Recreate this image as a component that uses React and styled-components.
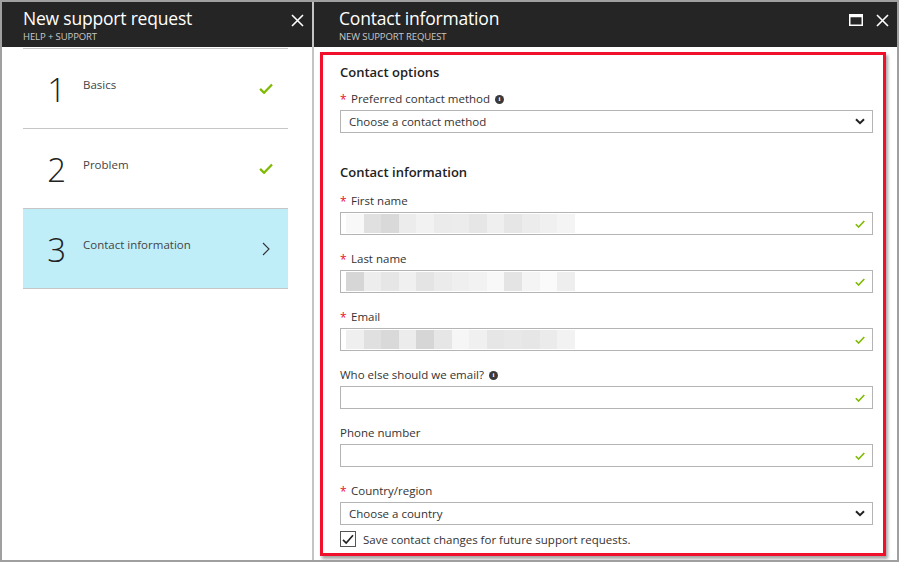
import React from "react";
import styled, { createGlobalStyle } from "styled-components";

const GlobalStyle = createGlobalStyle`
  * { box-sizing: border-box; }
  html, body { margin: 0; padding: 0; background: #fff; }
  body {
    font-family: "Open Sans", "Noto Sans", "Liberation Sans", sans-serif;
    color: #333;
  }
`;

const Frame = styled.div`
  width: 899px;
  height: 562px;
  border: 2px solid #a0a0a0;
  display: flex;
  overflow: hidden;
  background: #fff;
`;

const Blade = styled.section`
  display: flex;
  flex-direction: column;
  flex: ${(p) => (p.$grow ? "1 1 auto" : "0 0 312px")};
  border-right: ${(p) => (p.$grow ? "none" : "2px solid #c4c4c4")};
  min-width: 0;
`;

const Header = styled.header`
  height: 45px;
  flex: 0 0 45px;
  background: #252525;
  color: #fff;
  display: flex;
  align-items: flex-start;
  justify-content: space-between;
  padding: 0 8px 0 ${(p) => p.$pad}px;
`;

const TitleBlock = styled.div`
  display: flex;
  flex-direction: column;
  padding-top: 3px;
`;

const Title = styled.h1`
  margin: 0;
  font-size: 17.5px;
  font-weight: 400;
  line-height: 26px;
  letter-spacing: -0.2px;
`;

const Subtitle = styled.div`
  font-size: 9.5px;
  line-height: 12px;
  color: #c8c8c8;
  text-transform: uppercase;
  letter-spacing: -0.1px;
`;

const HeaderIcons = styled.div`
  display: flex;
  align-items: center;
  gap: 12px;
  padding-top: 11px;
`;

const IconButton = styled.span`
  display: inline-flex;
  width: 14px;
  height: 14px;
  align-items: center;
  justify-content: center;
`;

const StepList = styled.ul`
  list-style: none;
  margin: 1px 24px 0 21px;
  padding: 0;
  border-top: 1px solid #c6c6c6;
`;

const Step = styled.li`
  height: 80px;
  border-bottom: 1px solid #c6c6c6;
  background: ${(p) => (p.$active ? "#bfeef9" : "transparent")};
  display: grid;
  grid-template-columns: 60px 1fr 30px;
  align-items: center;
`;

const StepNumber = styled.span`
  font-size: 33px;
  font-weight: 300;
  color: #222;
  text-align: right;
  padding-right: 17px;
  line-height: 1;
  margin-top: 2px;
`;

const StepLabel = styled.span`
  font-size: 11.5px;
  color: #444;
  align-self: start;
  margin-top: 28px;
`;

const StepIcon = styled.span`
  display: inline-flex;
  align-items: center;
  justify-content: center;
  width: 16px;
`;

const Body = styled.div`
  flex: 1;
  padding: 5px 11px 4px 6px;
  display: flex;
  min-height: 0;
`;

const Highlight = styled.div`
  flex: 1;
  border: 3px solid #f0102c;
  box-shadow: 2px 3px 3px rgba(0, 0, 0, 0.35);
  padding: 7px 10px 0 17px;
  display: flex;
  flex-direction: column;
`;

const SectionTitle = styled.h2`
  margin: 0 0 ${(p) => p.$after}px;
  font-size: 13px;
  font-weight: 600;
  line-height: 20px;
  color: #222;
`;

const Field = styled.div`
  display: flex;
  flex-direction: column;
  gap: 3px;
  margin-bottom: ${(p) => p.$after}px;
`;

const Label = styled.label`
  display: flex;
  align-items: center;
  gap: 4px;
  height: 16px;
  font-size: 11.5px;
  line-height: 16px;
  color: #333;
`;

const Star = styled.span`
  color: #e8112b;
  font-size: 12px;
  width: 7px;
  line-height: 16px;
  padding-top: 2px;
`;

const Info = styled.span`
  display: inline-flex;
  width: 9px;
  height: 9px;
  border-radius: 50%;
  background: #3a3a3a;
  color: #fff;
  font-size: 7px;
  font-weight: 700;
  align-items: center;
  justify-content: center;
  font-family: "Liberation Serif", serif;
  margin-left: 1px;
`;

const Box = styled.div`
  height: 23px;
  border: 1px solid #b4b4b4;
  display: flex;
  align-items: center;
  justify-content: space-between;
  padding: 0 7px 0 ${(p) => (p.$select ? 8 : 5)}px;
  font-size: 11.5px;
  color: #333;
  background: #fff;
`;

const Blur = styled.div`
  display: flex;
  height: 19px;
`;

const Pixel = styled.span`
  width: 17.6px;
  height: 100%;
`;

const CheckRow = styled.label`
  display: flex;
  align-items: center;
  gap: 7px;
  margin-top: 6px;
  font-size: 11.5px;
  color: #333;
`;

const CheckBox = styled.span`
  width: 16px;
  height: 16px;
  border: 1px solid #555;
  display: inline-flex;
  align-items: center;
  justify-content: center;
`;

const Close = () => (
  <svg width="13" height="13" viewBox="0 0 13 13">
    <path d="M1 1L12 12M12 1L1 12" stroke="#fff" strokeWidth="1.6" />
  </svg>
);

const Maximize = () => (
  <svg width="14" height="12" viewBox="0 0 14 12">
    <rect x="0.75" y="0.75" width="12.5" height="10.5" fill="none" stroke="#fff" strokeWidth="1.5" />
    <rect x="0.75" y="0.75" width="12.5" height="2.5" fill="#fff" />
  </svg>
);

const Check = ({ size = 10 }) => (
  <svg width={size} height={size * 0.8} viewBox="0 0 10 8">
    <path d="M0.8 4.2L3.6 7L9.3 1" fill="none" stroke="#7fba00" strokeWidth="1.6" />
  </svg>
);

const Chevron = () => (
  <svg width="8" height="14" viewBox="0 0 8 14">
    <path d="M1 1L7 7L1 13" fill="none" stroke="#333" strokeWidth="1.1" />
  </svg>
);

const ChevronDown = () => (
  <svg width="10" height="7" viewBox="0 0 10 7">
    <path d="M1 1.2L5 5.2L9 1.2" fill="none" stroke="#222" strokeWidth="2" />
  </svg>
);

const TickMark = () => (
  <svg width="12" height="11" viewBox="0 0 12 11">
    <path d="M1 5.8L4.2 9L11 1.2" fill="none" stroke="#222" strokeWidth="1.7" />
  </svg>
);

const steps = [
  { n: 1, label: "Basics", done: true },
  { n: 2, label: "Problem", done: true },
  { n: 3, label: "Contact information", active: true },
];

const blurRows = {
  first: ["#f8f8f8", "#e0e0e0", "#d9d9d9", "#ececec", "#f2f2f2", "#ebebeb", "#ececec", "#e6e6e6", "#efefef", "#e6e6e6", "#ececec", "#f0f0f0", "#f4f4f4"],
  last: ["#d6d6d6", "#ededed", "#e6e6e6", "#f0f0f0", "#e4e4e4", "#ebebeb", "#efefef", "#f2f2f2", "#f8f8f8", "#e4e4e4", "#f4f4f4", "#fafafa", "#eeeeee"],
  email: ["#efefef", "#e0e0e0", "#d9d9d9", "#ececec", "#d6d6d6", "#e6e6e6", "#f6f6f6", "#f0f0f0", "#e6e6e6", "#e8e8e8", "#e6e6e6", "#ebebeb", "#f2f2f2"],
};

const fields = [
  { label: "First name", required: true, blur: blurRows.first },
  { label: "Last name", required: true, blur: blurRows.last },
  { label: "Email", required: true, blur: blurRows.email },
  { label: "Who else should we email?", info: true },
  { label: "Phone number" },
];

const FieldLabel = ({ required, info, children }) => (
  <Label>
    {required && <Star>*</Star>}
    {children}
    {info && <Info>i</Info>}
  </Label>
);

const App = () => {
  return (
    <>
      <GlobalStyle />
      <Frame>
        <Blade>
          <Header $pad={21}>
            <TitleBlock>
              <Title>New support request</Title>
              <Subtitle>Help + Support</Subtitle>
            </TitleBlock>
            <HeaderIcons>
              <IconButton>
                <Close />
              </IconButton>
            </HeaderIcons>
          </Header>
          <StepList>
            {steps.map((s) => (
              <Step key={s.n} $active={s.active}>
                <StepNumber>{s.n}</StepNumber>
                <StepLabel>{s.label}</StepLabel>
                <StepIcon>{s.done ? <Check size={14} /> : <Chevron />}</StepIcon>
              </Step>
            ))}
          </StepList>
        </Blade>
        <Blade $grow>
          <Header $pad={25}>
            <TitleBlock>
              <Title>Contact information</Title>
              <Subtitle>New support request</Subtitle>
            </TitleBlock>
            <HeaderIcons>
              <IconButton>
                <Maximize />
              </IconButton>
              <IconButton>
                <Close />
              </IconButton>
            </HeaderIcons>
          </Header>
          <Body>
            <Highlight>
              <SectionTitle $after={9}>Contact options</SectionTitle>
              <Field $after={29}>
                <FieldLabel required info>
                  Preferred contact method
                </FieldLabel>
                <Box $select>
                  Choose a contact method
                  <ChevronDown />
                </Box>
              </Field>
              <SectionTitle $after={11}>Contact information</SectionTitle>
              {fields.map((f) => (
                <Field key={f.label} $after={16}>
                  <FieldLabel required={f.required} info={f.info}>
                    {f.label}
                  </FieldLabel>
                  <Box>
                    <Blur>
                      {(f.blur || []).map((c, i) => (
                        <Pixel key={i} style={{ background: c }} />
                      ))}
                    </Blur>
                    <Check />
                  </Box>
                </Field>
              ))}
              <Field $after={0}>
                <FieldLabel required>Country/region</FieldLabel>
                <Box $select>
                  Choose a country
                  <ChevronDown />
                </Box>
              </Field>
              <CheckRow>
                <CheckBox>
                  <TickMark />
                </CheckBox>
                Save contact changes for future support requests.
              </CheckRow>
            </Highlight>
          </Body>
        </Blade>
      </Frame>
    </>
  );
};

export default App;
